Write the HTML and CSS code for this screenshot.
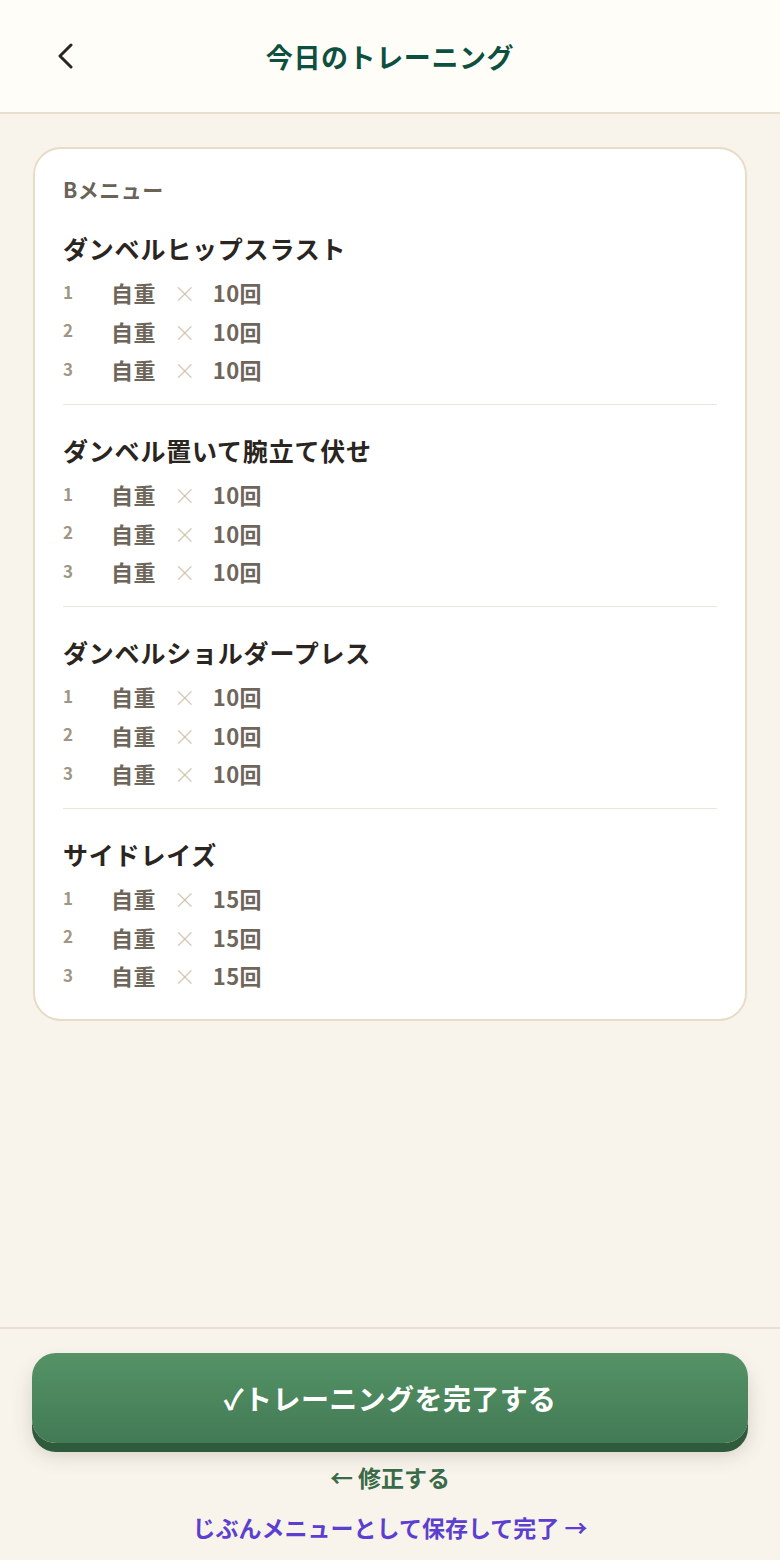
FILE: index.html
```html
<!DOCTYPE html>
<html lang="ja">
<head>
<meta charset="utf-8">
<link rel="stylesheet" href="styles.css">
</head>
<body>
<div class="app">
  <header class="topbar">
    <button class="back" aria-label="戻る">
      <svg width="18" height="26" viewBox="0 0 18 26"><polyline points="15,2 4,13 15,24" fill="none" stroke="#2a2520" stroke-width="3" stroke-linecap="round" stroke-linejoin="round"/></svg>
    </button>
    <h1 class="title">今日のトレーニング</h1>
  </header>
  <main class="main">
    <section class="card">
      <div class="menu-label">Bメニュー</div>
      <div class="exercise">
        <h2 class="ex-name">ダンベルヒップスラスト</h2>
        <div class="set"><span class="num">1</span><span class="load">自重</span><span class="x">×</span><span class="reps">10回</span></div>
        <div class="set"><span class="num">2</span><span class="load">自重</span><span class="x">×</span><span class="reps">10回</span></div>
        <div class="set"><span class="num">3</span><span class="load">自重</span><span class="x">×</span><span class="reps">10回</span></div>
      </div>
      <div class="exercise">
        <h2 class="ex-name">ダンベル置いて腕立て伏せ</h2>
        <div class="set"><span class="num">1</span><span class="load">自重</span><span class="x">×</span><span class="reps">10回</span></div>
        <div class="set"><span class="num">2</span><span class="load">自重</span><span class="x">×</span><span class="reps">10回</span></div>
        <div class="set"><span class="num">3</span><span class="load">自重</span><span class="x">×</span><span class="reps">10回</span></div>
      </div>
      <div class="exercise">
        <h2 class="ex-name">ダンベルショルダープレス</h2>
        <div class="set"><span class="num">1</span><span class="load">自重</span><span class="x">×</span><span class="reps">10回</span></div>
        <div class="set"><span class="num">2</span><span class="load">自重</span><span class="x">×</span><span class="reps">10回</span></div>
        <div class="set"><span class="num">3</span><span class="load">自重</span><span class="x">×</span><span class="reps">10回</span></div>
      </div>
      <div class="exercise">
        <h2 class="ex-name">サイドレイズ</h2>
        <div class="set"><span class="num">1</span><span class="load">自重</span><span class="x">×</span><span class="reps">15回</span></div>
        <div class="set"><span class="num">2</span><span class="load">自重</span><span class="x">×</span><span class="reps">15回</span></div>
        <div class="set"><span class="num">3</span><span class="load">自重</span><span class="x">×</span><span class="reps">15回</span></div>
      </div>
    </section>
  </main>
  <footer class="footer">
    <button class="complete">✓トレーニングを完了する</button>
    <a class="edit" href="#">← 修正する</a>
    <a class="save" href="#">じぶんメニューとして保存して完了 →</a>
  </footer>
</div>
</body>
</html>
```

FILE: styles.css
```css
* { box-sizing: border-box; }
html, body { margin: 0; padding: 0; }
body {
  background: #f8f4ec;
  font-family: "Noto Sans CJK JP", "Noto Sans", sans-serif;
  font-weight: 700;
  color: #2a2520;
}
.app {
  min-height: 1560px;
  display: flex;
  flex-direction: column;
}
.topbar {
  height: 114px;
  background: #fffdf8;
  border-bottom: 2px solid #e8dfd0;
  display: flex;
  align-items: center;
  justify-content: center;
  position: relative;
}
.back {
  position: absolute;
  left: 52px;
  top: 43px;
  background: none;
  border: 0;
  padding: 0;
  width: 26px;
  height: 26px;
  display: flex;
  align-items: center;
  justify-content: center;
}
.title {
  margin: 0;
  font-size: 27px;
  font-weight: 700;
  color: #0d5040;
  letter-spacing: 0.6px;
}
.main {
  flex: 1;
  padding: 33px 33px 0;
}
.card {
  background: #fff;
  border: 2px solid #e8dcc8;
  border-radius: 28px;
  padding: 26px 28px 24px;
}
.menu-label {
  font-size: 21px;
  line-height: 28px;
  color: #6b6258;
  letter-spacing: 0.5px;
}
.exercise {
  padding: 28px 0 15.5px;
  border-bottom: 1px solid #ece6da;
}
.exercise:last-child { border-bottom: 0; padding-bottom: 0; }
.ex-name {
  margin: 0 0 8px;
  font-size: 25px;
  line-height: 34px;
  letter-spacing: 0.8px;
  color: #2a2520;
}
.set {
  display: flex;
  align-items: center;
  height: 38.5px;
  color: #6e655b;
}
.num {
  width: 48px;
  font-size: 17px;
  color: #a09684;
  margin-top: -2px;
}
.load, .reps {
  font-size: 22px;
  letter-spacing: 0.4px;
}
.x {
  font-size: 22px;
  font-weight: 300;
  color: #cfc3ae;
  margin: 0 17px 0 18px;
}
.footer {
  border-top: 2px solid #e8dfd0;
  padding: 24px 32px 18px;
  display: flex;
  flex-direction: column;
  align-items: center;
}
.complete {
  width: 100%;
  height: 90px;
  border: 0;
  border-radius: 24px;
  background: linear-gradient(#559366, #427a55);
  box-shadow: 0 9px 0 #2f5a3b, 0 12px 20px rgba(60, 50, 30, 0.18);
  color: #fff;
  font-family: inherit;
  font-weight: 700;
  font-size: 28px;
  letter-spacing: 0.4px;
}
.edit {
  margin-top: 19px;
  font-size: 23px;
  line-height: 30px;
  color: #3a6b48;
  text-decoration: none;
}
.save {
  margin-top: 20px;
  font-size: 23px;
  line-height: 30px;
  color: #5b3fd0;
  text-decoration: none;
}
```
